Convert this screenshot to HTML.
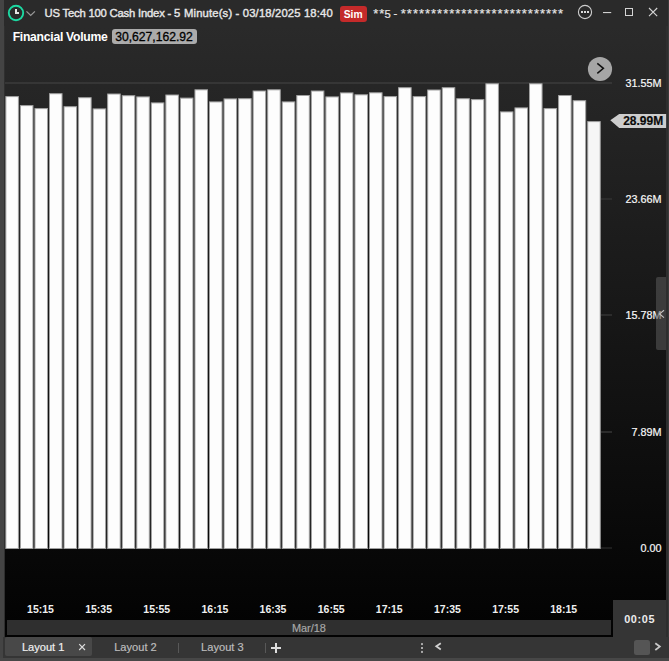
<!DOCTYPE html>
<html><head><meta charset="utf-8">
<style>
*{margin:0;padding:0;box-sizing:border-box}
html,body{width:669px;height:661px;overflow:hidden;background:#2b2b2b;font-family:"Liberation Sans",sans-serif;position:relative}
.abs{position:absolute}
#lstrip{position:absolute;left:0;top:0;width:3.8px;height:658px;background:#444}
#lstrip2{position:absolute;left:3.8px;top:26px;width:1.5px;height:632px;background:#2f2f2f}
#title{position:absolute;left:3.5px;top:0;width:664px;height:26px;background:#2a2a2a}
#chart{position:absolute;left:5px;top:26px;width:661px;height:611px;background:linear-gradient(to bottom,#2a2a2a 0%,#020202 100%)}
#rstrip{position:absolute;left:666px;top:26px;width:1.7px;height:632px;background:#2e2e2e}
#rstrip2{position:absolute;left:667.7px;top:0;width:1.3px;height:658px;background:#3a3a3a}
.tt{position:absolute;color:#e8e8e8;white-space:pre;-webkit-text-stroke:0.18px currentColor}
.ast{font-size:13px;letter-spacing:0.99px;line-height:16px;color:#e6e6e6}
.yl{position:absolute;right:7.5px;width:60px;text-align:right;color:#f8f8f8;font-size:10.8px;line-height:16px;white-space:pre;-webkit-text-stroke:0.2px #f8f8f8}
.tick{position:absolute;left:601px;width:11px;height:2px;background:#2c2c2c}
.tl{position:absolute;top:601px;width:60px;text-align:center;color:#f0f0f0;font-size:10.5px;font-weight:700;line-height:16px}
#track{position:absolute;left:7px;top:620px;width:604px;height:14.7px;background:#2f2f2f}
#tabbar{position:absolute;left:3px;top:637px;width:666px;height:21px;background:#353535}
#bot{position:absolute;left:0;top:658px;width:669px;height:3px;background:#474747}
#corner{position:absolute;left:613px;top:600px;width:53px;height:58px;background:#353535}
</style></head><body>
<div id="lstrip"></div>
<div id="title"></div>
<div id="lstrip2"></div>
<div id="chart"></div>
<div id="rstrip"></div>
<div id="rstrip2"></div>

<!-- clock icon -->
<svg class="abs" style="left:0;top:0" width="40" height="26">
<circle cx="16" cy="13" r="7.2" fill="none" stroke="#1cd9a2" stroke-width="1.9"/>
<path d="M15 9 H17 V12 H19 V14 H15 Z" fill="#e4e4e4"/>
<path d="M26.5 11.3 L30.7 15.5 L34.9 11.3" fill="none" stroke="#9a9a9a" stroke-width="1.2"/>
</svg>
<div class="tt" style="left:44.5px;top:5px;font-size:11.25px;letter-spacing:-0.19px;line-height:16px;color:#e6e6e6;-webkit-text-stroke:0.4px #e6e6e6">US Tech 100 Cash Index - 5</div>
<div class="tt" style="left:184px;top:5px;font-size:11.25px;letter-spacing:0.157px;line-height:16px;color:#e6e6e6;-webkit-text-stroke:0.4px #e6e6e6">Minute(s) - 03/18/2025 18:40</div>
<div class="abs" style="left:340px;top:6.3px;width:27px;height:15.7px;background:#c42a2a;border-radius:3px"></div>
<div class="tt" style="left:343.7px;top:7px;font-size:10.3px;font-weight:700;line-height:16px;color:#fff;-webkit-text-stroke:0">Sim</div>
<div class="tt ast" style="left:373.2px;top:6px">**</div>
<div class="tt" style="left:384.6px;top:5.5px;font-size:11.25px;line-height:16px;color:#e6e6e6">5</div>
<div class="tt" style="left:393.6px;top:5px;font-size:11.25px;line-height:16px;color:#e6e6e6">-</div>
<div class="tt ast" style="left:400.8px;top:6px">***************************</div>

<!-- window controls -->
<svg class="abs" style="left:570px;top:0" width="99" height="26">
<circle cx="15" cy="12" r="6.6" fill="none" stroke="#cdcdcd" stroke-width="1.1"/>
<rect x="11" y="11" width="2" height="2" fill="#dcdcdc"/>
<rect x="14" y="11" width="2" height="2" fill="#dcdcdc"/>
<rect x="17" y="11" width="2" height="2" fill="#dcdcdc"/>
<rect x="33" y="12" width="8.2" height="1.1" fill="#d0d0d0"/>
<rect x="55.5" y="8.5" width="7" height="7" fill="none" stroke="#d4d4d4" stroke-width="1"/>
<path d="M79 8 L87.2 16.2 M87.2 8 L79 16.2" stroke="#d4d4d4" stroke-width="1.1"/>
</svg>

<!-- financial volume -->
<div class="tt" style="left:12.7px;top:28.6px;font-size:12.2px;letter-spacing:-0.28px;font-weight:700;line-height:16px;color:#fff;-webkit-text-stroke:0">Financial Volume</div>
<div class="abs" style="left:112.2px;top:29.3px;width:84.7px;height:14.6px;background:#ababab;border-radius:3px"></div>
<div class="tt" style="left:115.2px;top:28.5px;font-size:12.15px;line-height:16px;color:#000;-webkit-text-stroke:0.3px #000">30,627,162.92</div>

<!-- grid line top -->
<div class="abs" style="left:5px;top:82px;width:607px;height:2px;background:#363636"></div>
<div class="tick" style="top:198.2px"></div>
<div class="tick" style="top:313.6px"></div>
<div class="tick" style="top:430.7px"></div>
<div class="tick" style="top:547.0px"></div>
<div class="abs" style="left:5px;top:547.3px;width:607px;height:1.5px;background:#1d1d1d"></div>

<!-- bars -->
<svg class="abs" style="left:0;top:0" width="669" height="661">
<g fill="#fdfdfd" stroke="#a0a0a0" stroke-width="1">
<rect x="5.85" y="96.60" width="12.55" height="451.90"/>
<rect x="20.40" y="105.60" width="12.55" height="442.90"/>
<rect x="34.94" y="108.60" width="12.55" height="439.90"/>
<rect x="49.49" y="93.70" width="12.55" height="454.80"/>
<rect x="64.03" y="106.70" width="12.55" height="441.80"/>
<rect x="78.58" y="97.70" width="12.55" height="450.80"/>
<rect x="93.13" y="108.90" width="12.55" height="439.60"/>
<rect x="107.67" y="94.00" width="12.55" height="454.50"/>
<rect x="122.22" y="95.70" width="12.55" height="452.80"/>
<rect x="136.76" y="96.90" width="12.55" height="451.60"/>
<rect x="151.31" y="102.90" width="12.55" height="445.60"/>
<rect x="165.86" y="95.00" width="12.55" height="453.50"/>
<rect x="180.40" y="98.10" width="12.55" height="450.40"/>
<rect x="194.95" y="89.80" width="12.55" height="458.70"/>
<rect x="209.49" y="101.90" width="12.55" height="446.60"/>
<rect x="224.04" y="98.90" width="12.55" height="449.60"/>
<rect x="238.59" y="98.70" width="12.55" height="449.80"/>
<rect x="253.13" y="91.00" width="12.55" height="457.50"/>
<rect x="267.68" y="89.80" width="12.55" height="458.70"/>
<rect x="282.22" y="101.90" width="12.55" height="446.60"/>
<rect x="296.77" y="95.50" width="12.55" height="453.00"/>
<rect x="311.32" y="91.00" width="12.55" height="457.50"/>
<rect x="325.86" y="96.90" width="12.55" height="451.60"/>
<rect x="340.41" y="92.90" width="12.55" height="455.60"/>
<rect x="354.95" y="94.80" width="12.55" height="453.70"/>
<rect x="369.50" y="92.80" width="12.55" height="455.70"/>
<rect x="384.05" y="96.60" width="12.55" height="451.90"/>
<rect x="398.59" y="87.70" width="12.55" height="460.80"/>
<rect x="413.14" y="96.60" width="12.55" height="451.90"/>
<rect x="427.68" y="90.00" width="12.55" height="458.50"/>
<rect x="442.23" y="87.70" width="12.55" height="460.80"/>
<rect x="456.78" y="98.70" width="12.55" height="449.80"/>
<rect x="471.32" y="99.60" width="12.55" height="448.90"/>
<rect x="485.87" y="83.80" width="12.55" height="464.70"/>
<rect x="500.41" y="111.90" width="12.55" height="436.60"/>
<rect x="514.96" y="107.90" width="12.55" height="440.60"/>
<rect x="529.51" y="83.80" width="12.55" height="464.70"/>
<rect x="544.05" y="108.60" width="12.55" height="439.90"/>
<rect x="558.60" y="95.50" width="12.55" height="453.00"/>
<rect x="573.14" y="100.70" width="12.55" height="447.80"/>
<rect fill="#f6f6f6" x="587.69" y="121.60" width="12.55" height="426.90"/>
</g>
</svg>

<!-- next circle button -->
<svg class="abs" style="left:580px;top:50px" width="40" height="40">
<circle cx="20" cy="19" r="12.1" fill="#a6a6a6"/>
<path d="M17.3 13.3 L23.4 18.3 L17.3 23.3" fill="none" stroke="#111" stroke-width="1.5"/>
</svg>

<div class="yl" style="top:75.0px">31.55M</div>
<div class="yl" style="top:191.2px">23.66M</div>
<div class="yl" style="top:306.6px">15.78M</div>
<div class="yl" style="top:423.7px">7.89M</div>
<div class="yl" style="top:540.0px">0.00</div>
<!-- price marker -->
<svg class="abs" style="left:605px;top:105px" width="64" height="30">
<path d="M5.3 15.3 L14.2 8.9 H61.1 V23 H14.2 Z" fill="#cdcdcd"/>
</svg>
<div class="tt" style="left:623.2px;top:113px;font-size:12px;font-weight:700;line-height:16px;color:#0a0a0a">28.99M</div>

<!-- right handle -->
<div class="abs" style="left:655.8px;top:277px;width:10.5px;height:72.5px;background:rgba(85,85,85,0.6);border-radius:2px 0 0 2px"></div>
<svg class="abs" style="left:655px;top:305px" width="12" height="16">
<path d="M9 5.3 L4.6 8.9 L9 12.6" fill="none" stroke="#c4c4c4" stroke-width="1.1"/>
</svg>

<!-- time axis -->
<div class="tl" style="left:10.5px">15:15</div>
<div class="tl" style="left:68.6px">15:35</div>
<div class="tl" style="left:126.8px">15:55</div>
<div class="tl" style="left:184.9px">16:15</div>
<div class="tl" style="left:243.0px">16:35</div>
<div class="tl" style="left:301.2px">16:55</div>
<div class="tl" style="left:359.3px">17:15</div>
<div class="tl" style="left:417.4px">17:35</div>
<div class="tl" style="left:475.6px">17:55</div>
<div class="tl" style="left:533.7px">18:15</div>
<div id="track"></div>
<div class="tt" style="left:291.9px;top:620px;font-size:10.95px;line-height:16px;color:#a8a8a8">Mar/18</div>

<div id="tabbar"></div>
<div id="corner"></div>
<div id="bot"></div>
<div class="abs" style="left:4.9px;top:637.4px;width:86.9px;height:18.4px;background:#484848;border-radius:2px"></div>
<div class="tt" style="left:21.9px;top:639px;font-size:11.1px;line-height:16px;color:#f0f0f0">Layout 1</div>
<svg class="abs" style="left:76px;top:641px" width="12" height="12">
<path d="M3.2 3.2 L9 9 M9 3.2 L3.2 9" stroke="#dcdcdc" stroke-width="1.2"/>
</svg>
<div class="tt" style="left:114.2px;top:639px;font-size:11.1px;line-height:16px;color:#bdbdbd">Layout 2</div>
<div class="abs" style="left:178px;top:643px;width:1px;height:10px;background:#585858"></div>
<div class="tt" style="left:201.1px;top:639px;font-size:11.1px;line-height:16px;color:#bdbdbd">Layout 3</div>
<div class="abs" style="left:265px;top:643px;width:1px;height:10px;background:#585858"></div>
<svg class="abs" style="left:268px;top:640px" width="16" height="16">
<path d="M3 7 H13 V9 H3 Z M7 3 H9 V13 H7 Z" fill="#dedede"/>
</svg>
<svg class="abs" style="left:416px;top:640px" width="30" height="16">
<rect x="5" y="3.1" width="2" height="2" fill="#aaa"/>
<rect x="5" y="7" width="2" height="2" fill="#aaa"/>
<rect x="5" y="10.9" width="2" height="2" fill="#aaa"/>
<path d="M24.8 3.2 L20.3 6.3 L24.8 9.4" fill="none" stroke="#d0d0d0" stroke-width="1.8"/>
</svg>
<div class="tt" style="left:624.2px;top:610.6px;font-size:10.9px;letter-spacing:0.6px;font-weight:700;line-height:16px;color:#ececec;-webkit-text-stroke:0">00:05</div>
<div class="abs" style="left:634.3px;top:640px;width:15.7px;height:14.8px;background:#555;border-radius:2.5px"></div>
<svg class="abs" style="left:652px;top:640px" width="12" height="14">
<path d="M3.3 3.2 L7.8 6.6 L3.3 10" fill="none" stroke="#c8c8c8" stroke-width="1.8"/>
</svg>
</body></html>
